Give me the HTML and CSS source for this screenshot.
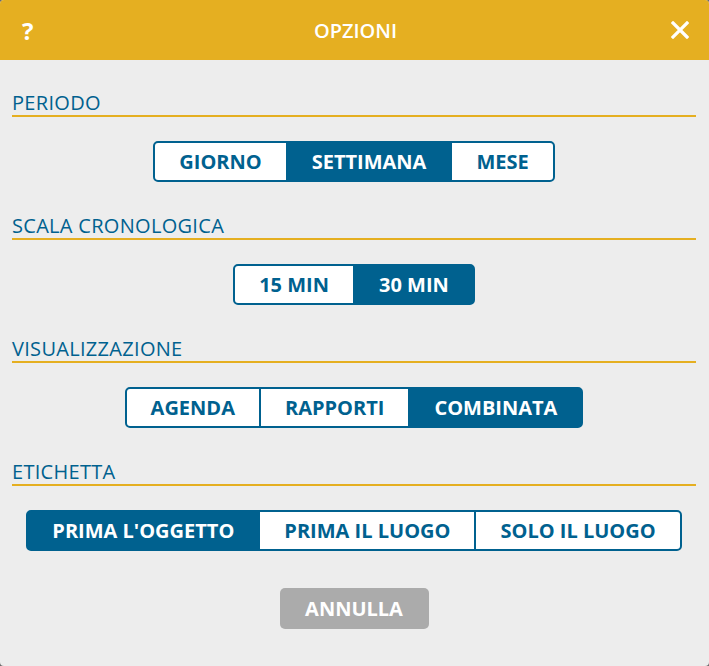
FILE: index.html
```html
<!DOCTYPE html>
<html lang="it">
<head>
    <meta charset="UTF-8">
    <meta name="viewport" content="width=device-width, initial-scale=1.0">
    <title>Opzioni</title>
    <link rel="stylesheet" href="styles.css">
</head>
<body>
    <div class="dialog">
        <div class="dialog-header">
            <span class="help-icon">?</span>
            <span class="dialog-title">OPZIONI</span>
            <span class="close-icon">
                <svg width="18" height="18" viewBox="0 0 18 18">
                    <path d="M2 2 L16 16 M16 2 L2 16" stroke="#fff" stroke-width="3.2" stroke-linecap="square"/>
                </svg>
            </span>
        </div>
        <div class="dialog-body">
            <div class="section">
                <h2>PERIODO</h2>
                <div class="toggle-group">
                    <button>GIORNO</button>
                    <button class="active">SETTIMANA</button>
                    <button>MESE</button>
                </div>
            </div>
            <div class="section">
                <h2>SCALA CRONOLOGICA</h2>
                <div class="toggle-group">
                    <button>15 MIN</button>
                    <button class="active">30 MIN</button>
                </div>
            </div>
            <div class="section">
                <h2>VISUALIZZAZIONE</h2>
                <div class="toggle-group">
                    <button>AGENDA</button>
                    <button>RAPPORTI</button>
                    <button class="active">COMBINATA</button>
                </div>
            </div>
            <div class="section">
                <h2>ETICHETTA</h2>
                <div class="toggle-group">
                    <button class="active">PRIMA L'OGGETTO</button>
                    <button>PRIMA IL LUOGO</button>
                    <button>SOLO IL LUOGO</button>
                </div>
            </div>
            <div class="footer">
                <button class="cancel-button">ANNULLA</button>
            </div>
        </div>
    </div>
</body>
</html>
```

FILE: styles.css
```css
body {
    margin: 0;
    padding: 0;
    background-color: #6b6b6b;
    font-family: 'Open Sans', 'Noto Sans', sans-serif;
}
.dialog {
    width: 709px;
    height: 666px;
    background-color: #ededed;
    border-radius: 4px;
    overflow: hidden;
}
.dialog-header {
    height: 60px;
    background-color: #e5af21;
    color: white;
    display: flex;
    align-items: center;
    justify-content: space-between;
    padding: 0 20px 0 22px;
    box-sizing: border-box;
}
.help-icon {
    font-size: 24px;
    font-weight: 700;
    width: 20px;
}
.dialog-title {
    font-size: 20px;
    font-weight: 600;
}
.close-icon {
    width: 20px;
    display: flex;
    justify-content: flex-end;
}
.dialog-body {
    padding: 31px 13px 0 12px;
}
.section {
    margin-bottom: 32px;
}
h2 {
    margin: 0;
    font-size: 20px;
    font-weight: 400;
    line-height: 24px;
    letter-spacing: 0.3px;
    color: #00618f;
    border-bottom: 2px solid #e5af21;
}
.toggle-group {
    display: flex;
    width: max-content;
    margin: 24px auto 0;
    border: 2px solid #00618f;
    border-radius: 5px;
    overflow: hidden;
    background-color: #00618f;
    gap: 2px;
}
.toggle-group button {
    margin: 0;
    border: none;
    background-color: white;
    color: #00618f;
    font-family: inherit;
    font-size: 20px;
    font-weight: 700;
    height: 37px;
    padding: 0 24px;
    cursor: pointer;
}
.toggle-group button.active {
    background-color: #00618f;
    color: white;
}
.footer {
    display: flex;
    justify-content: center;
    margin-top: 37px;
}
.cancel-button {
    width: 149px;
    height: 41px;
    border: none;
    border-radius: 5px;
    background-color: #ababab;
    color: white;
    font-family: inherit;
    font-size: 20px;
    font-weight: 700;
}
```
